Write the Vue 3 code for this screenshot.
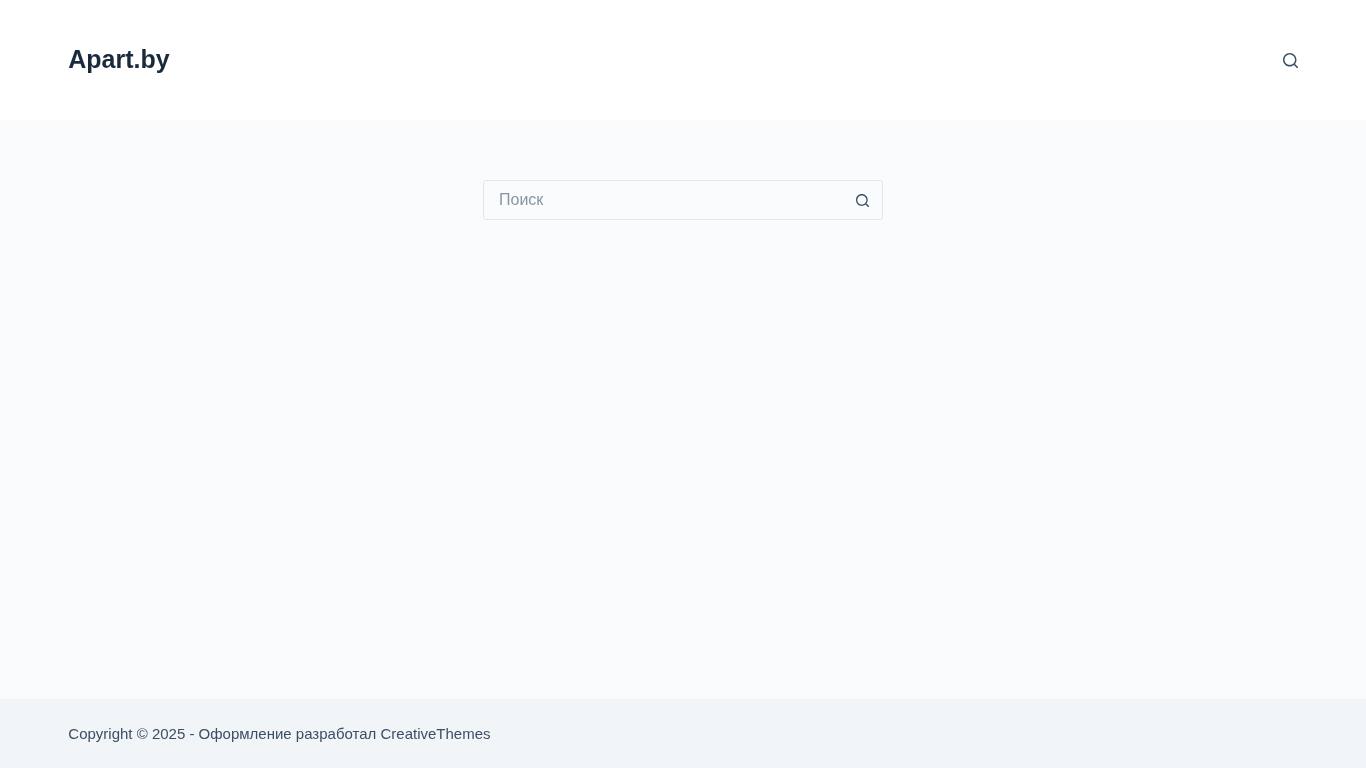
<script setup>
</script>

<template>
  <div class="page">
    <header class="header">
      <div class="bar">
        <a class="brand">Apart.by</a>
        <button class="search-toggle" aria-label="Поиск">
          <svg width="15" height="15" viewBox="0 0 15 15"><path d="M14.8,13.7L12,11c0.9-1.2,1.5-2.7,1.5-4.2c0-3.7-3-6.8-6.8-6.8S0,3,0,6.8s3,6.8,6.8,6.8c1.6,0,3.1-0.6,4.2-1.5l2.8,2.8c0.1,0.1,0.3,0.2,0.5,0.2s0.4-0.1,0.5-0.2C15.1,14.4,15.1,14,14.8,13.7z M1.5,6.8c0-2.9,2.4-5.2,5.2-5.2S12,3.9,12,6.8S9.6,12,6.8,12S1.5,9.6,1.5,6.8z"/></svg>
        </button>
      </div>
    </header>
    <main class="main">
      <form class="search" @submit.prevent>
        <input class="search-input" type="search" placeholder="Поиск" />
        <button class="search-submit" aria-label="Поиск">
          <svg width="15" height="15" viewBox="0 0 15 15"><path d="M14.8,13.7L12,11c0.9-1.2,1.5-2.7,1.5-4.2c0-3.7-3-6.8-6.8-6.8S0,3,0,6.8s3,6.8,6.8,6.8c1.6,0,3.1-0.6,4.2-1.5l2.8,2.8c0.1,0.1,0.3,0.2,0.5,0.2s0.4-0.1,0.5-0.2C15.1,14.4,15.1,14,14.8,13.7z M1.5,6.8c0-2.9,2.4-5.2,5.2-5.2S12,3.9,12,6.8S9.6,12,6.8,12S1.5,9.6,1.5,6.8z"/></svg>
        </button>
      </form>
    </main>
    <footer class="footer">
      <div class="bar">Copyright © 2025 - Оформление разработал CreativeThemes</div>
    </footer>
  </div>
</template>

<style>
body {
  margin: 0;
}
</style>

<style scoped>
.page {
  height: 768px;
  display: flex;
  flex-direction: column;
  font-family: "Liberation Sans", Arial, sans-serif;
  background: #fafbfd;
  overflow: hidden;
}

.header {
  height: 120px;
  flex: none;
  display: flex;
  background: #fff;
}

/* own layer, so the text gets greyscale antialiasing like the reference */
.bar,
.search-input {
  will-change: transform;
}

.bar {
  flex: 1;
  display: flex;
  align-items: center;
  justify-content: space-between;
  padding: 0 5vw;
}

.brand {
  font-size: 25px;
  font-weight: 700;
  line-height: 1;
  margin-bottom: 2px;
  color: #192a3d;
}

.search-toggle {
  width: 15px;
  height: 15px;
  padding: 0;
  border: 0;
  background: none;
  display: flex;
  fill: #3a4f66;
}

.main {
  flex: 1;
  display: flex;
  justify-content: center;
  padding-top: 60px;
}

.search {
  width: 400px;
  height: 40px;
  box-sizing: border-box;
  display: flex;
  align-items: center;
  border: 1px solid #e1e8ed;
  border-radius: 3px;
}

.search-input {
  flex: 1;
  min-width: 0;
  height: 100%;
  padding: 0 15px;
  border: 0;
  outline: 0;
  background: none;
  font: 16px "Liberation Sans", Arial, sans-serif;
  color: #3a4f66;
}

.search-input::placeholder {
  color: rgba(58, 79, 102, 0.6);
}

.search-submit {
  width: 40px;
  height: 38px;
  flex: none;
  padding: 0;
  border: 0;
  background: none;
  display: flex;
  align-items: center;
  justify-content: center;
  fill: #3a4f66;
}

.search-submit svg {
  width: 13px;
  height: 13px;
}

.footer {
  height: 69px;
  flex: none;
  display: flex;
  background: #f2f5f8;
  font-size: 15px;
  color: #3a4f66;
}
</style>
